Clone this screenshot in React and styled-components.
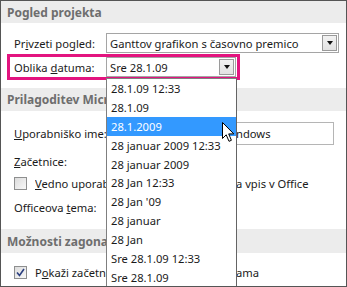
import React from 'react';
import styled, { createGlobalStyle } from 'styled-components';

const GlobalStyle = createGlobalStyle`
  body {
    margin: 0;
    font-family: "Noto Sans", "Open Sans", sans-serif;
    font-size: 11.2px;
    color: #1a1a1a;
  }
`

const Frame = styled.div`
  position: relative;
  width: 347px;
  height: 287px;
  box-sizing: border-box;
  border: 1px solid #555;
  background: #fff;
  overflow: hidden;
`

const SectionHeader = styled.div`
  height: ${props => props.h || 22}px;
  display: flex;
  align-items: center;
  padding-left: 6px;
  background: #ececec;
  color: #6e6e6e;
  font-weight: 700;
  font-size: 12px;
`

const SectionBody = styled.div`
  display: flex;
  flex-direction: column;
  padding: ${props => props.pad || '0'};
`

const Row = styled.div`
  display: flex;
  align-items: center;
  height: ${props => props.h || 20}px;
  margin-top: ${props => props.mt || 0}px;
  padding-left: 13px;
`

const Highlight = styled.div`
  display: flex;
  align-items: center;
  width: 233px;
  height: 26px;
  margin: 1px 0 0 6px;
  box-sizing: border-box;
  border: 3px solid #e3147f;
  padding-left: 4px;
`

const Label = styled.span`
  width: ${props => props.w || 92}px;
  flex-shrink: 0;
  white-space: nowrap;
`

const Key = styled.u`
  text-decoration: underline;
`

// part of a text that runs under the open list; clipped at the list edge
const Covered = styled.span`
  display: inline-block;
  width: ${props => props.w}px;
  overflow: hidden;
  white-space: nowrap;
  vertical-align: top;
`

const Select = styled.div`
  display: flex;
  align-items: center;
  justify-content: space-between;
  width: ${props => props.w}px;
  height: 20px;
  box-sizing: border-box;
  border: 1px solid #a5a5a5;
  padding: 0 1px 0 3px;
  background: #fff;
`

const DropButton = styled.div`
  width: 15px;
  height: 16px;
  box-sizing: border-box;
  border: 1px solid #9a9a9a;
  background: linear-gradient(#f2f2f2, #e2e2e2);
  display: flex;
  align-items: center;
  justify-content: center;
  &::after {
    content: '';
    border-left: 3.5px solid transparent;
    border-right: 3.5px solid transparent;
    border-top: 4px solid #111;
  }
`

const TextInput = styled.div`
  width: 213px;
  height: 23px;
  box-sizing: border-box;
  border: 1px solid #b5b5b5;
  display: flex;
  align-items: center;
  padding-left: 4px;
  white-space: nowrap;
  overflow: hidden;
`

const CheckRow = styled(Row)`
  gap: 8px;
`

const Checkbox = styled.span`
  width: 13px;
  height: 13px;
  flex-shrink: 0;
  box-sizing: border-box;
  border: 1px solid #8e8f8f;
  background: linear-gradient(135deg, #dcdcdc, #f8f8f8);
  display: flex;
  align-items: center;
  justify-content: center;
`

const ListBox = styled.div`
  position: absolute;
  left: 105px;
  top: 77px;
  width: 131px;
  height: 220px;
  box-sizing: border-box;
  border: 1px solid #7f7f7f;
  border-right-color: #646464;
  background: #fff;
`

const ListItem = styled.div`
  height: 18.9px;
  display: flex;
  align-items: center;
  padding-left: 4px;
  white-space: nowrap;
  background: ${props => (props.active ? '#3399ff' : 'transparent')};
  color: ${props => (props.active ? '#fff' : '#1a1a1a')};
`

const Cursor = styled.svg`
  position: absolute;
  left: 220px;
  top: 120px;
`

const formats = [
  '28.1.09 12:33',
  '28.1.09',
  '28.1.2009',
  '28 januar 2009 12:33',
  '28 januar 2009',
  '28 Jan 12:33',
  "28 Jan '09",
  '28 januar',
  '28 Jan',
  'Sre 28.1.09 12:33',
  'Sre 28.1.09',
]

const App = () => {
  return (
    <>
      <GlobalStyle />
      <Frame>
        <SectionHeader>Pogled projekta</SectionHeader>
        <SectionBody pad="0 0 8px 0">
          <Row mt={10}>
            <Label>Pr<Key>i</Key>vzeti pogled:</Label>
            <Select w={233}>
              <span>Ganttov grafikon s časovno premico</span>
              <DropButton />
            </Select>
          </Row>
          <Highlight>
            <Label>Oblika <Key>d</Key>atuma:</Label>
            <Select w={130}>
              <span>Sre 28.1.09</span>
              <DropButton />
            </Select>
          </Highlight>
        </SectionBody>

        <SectionHeader h={23}>Prilagoditev Microsoft Office</SectionHeader>
        <SectionBody pad="0 0 12px 0">
          <Row h={23} mt={11}>
            <Label w={107}><Key>U</Key>porabniško ime:</Label>
            <TextInput>
              <Covered w={110}>Uporabnik sistema Wi</Covered>ndows
            </TextInput>
          </Row>
          <Row mt={6}>
            <Label><Key>Z</Key>ačetnice:</Label>
          </Row>
          <CheckRow mt={2}>
            <Checkbox />
            <span>
              <Covered w={201}><Key>V</Key>edno uporabi te vrednosti ne glede n</Covered>a vpis v Office
            </span>
          </CheckRow>
          <Row mt={4}>
            <Label>Officeova <Key>t</Key>ema:</Label>
          </Row>
        </SectionBody>

        <SectionHeader h={24}>Možnosti zagona</SectionHeader>
        <SectionBody>
          <CheckRow mt={9}>
            <Checkbox>
              <svg width="9" height="9" viewBox="0 0 9 9">
                <path d="M1 4.5 L3.5 7.5 L8 1" fill="none" stroke="#2b3f7f" strokeWidth="1.6" />
              </svg>
            </Checkbox>
            <span>
              <Covered w={201}>P<Key>o</Key>kaži začetni zaslon ob zagonu progr</Covered>ama
            </span>
          </CheckRow>
        </SectionBody>

        <ListBox>
          {formats.map(f => (
            <ListItem key={f} active={f === '28.1.2009'}>
              {f}
            </ListItem>
          ))}
        </ListBox>

        <Cursor width="14" height="22" viewBox="0 0 14 22">
          <path
            d="M1.5 1.5 L1.5 17.5 L5.2 13.8 L8 20.3 L10.4 19.3 L7.7 12.9 L12.8 12.9 Z"
            fill="#fff"
            stroke="#000"
            strokeWidth="1"
            strokeLinejoin="round"
          />
        </Cursor>
      </Frame>
    </>
  );
};

export default App;
